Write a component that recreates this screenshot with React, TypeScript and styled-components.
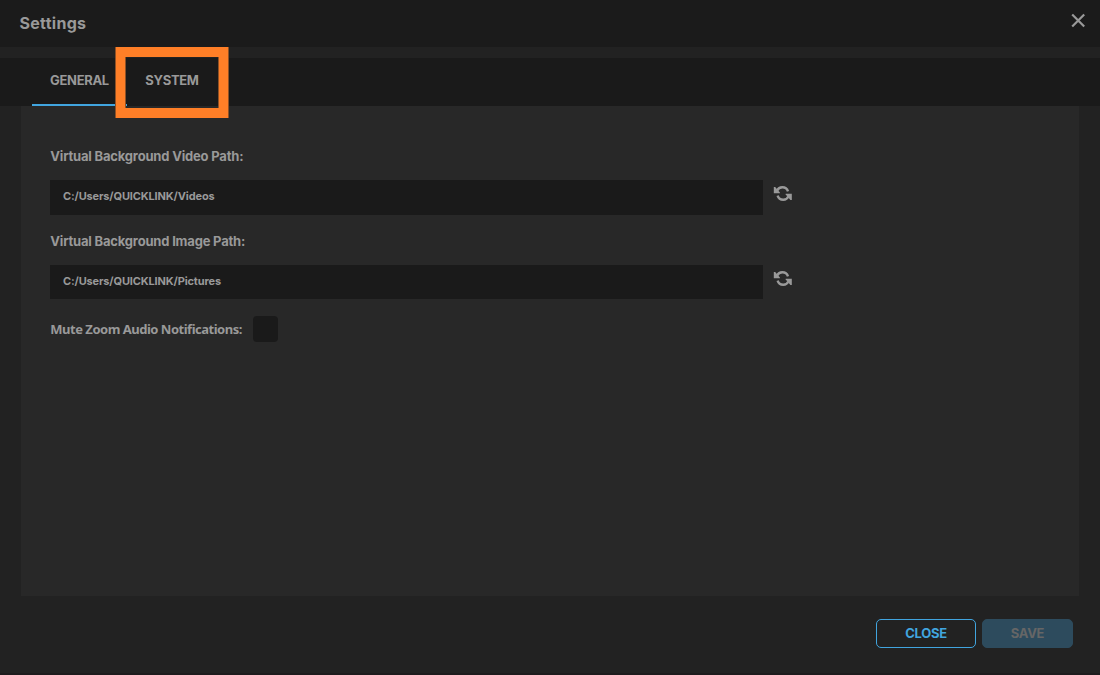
import React from "react";
import styled, { createGlobalStyle } from "styled-components";

const GlobalStyle = createGlobalStyle`
  * { box-sizing: border-box; }
  body { margin: 0; background: #222222; font-family: Inter, "Liberation Sans", sans-serif; color: #999999; }
`;

const Dialog = styled.div`
  display: flex;
  flex-direction: column;
  width: 1100px;
  height: 675px;
  overflow: hidden;
  background: #222222;
  border-bottom: 2px solid #1e1c1d;
`;

const Header = styled.header`
  display: flex;
  justify-content: space-between;
  align-items: flex-start;
  height: 47px;
  flex: none;
  padding: 13px 15px 0 19.5px;
  background: #1b1b1b;
`;

const Title = styled.h1`
  margin: 0;
  font-size: 16px;
  line-height: 20px;
  font-weight: 700;
  letter-spacing: 0.28px;
`;

const IconButton = styled.button`
  display: block;
  padding: 0;
  border: 0;
  background: none;
  color: #999999;
  line-height: 0;
`;

const Tabs = styled.nav`
  display: flex;
  flex: none;
  height: 48px;
  margin-top: 11px;
  padding-left: 32px;
  background: #1a1a1a;
`;

const Tab = styled.button<{ $active?: boolean }>`
  position: relative;
  width: ${(p) => (p.$active ? 95 : 90)}px;
  padding: 0 0 2px;
  border: 0;
  border-bottom: 2px solid ${(p) => (p.$active ? "#41a5df" : "transparent")};
  background: none;
  color: #999999;
  font: 700 13px/16px Inter, sans-serif;
  letter-spacing: -0.32px;
`;

const Highlight = styled.span`
  position: absolute;
  left: -11px;
  top: -11px;
  width: 112px;
  height: 71px;
  border: solid #ff7f27;
  border-width: 10px 9px;
  box-shadow: 1px 0 #8f5125, -1px 0 #8f5125, inset 1px 0 #8f5125, inset -1px 0 #8f5125;
`;

const Panel = styled.main`
  flex: none;
  height: 490px;
  margin: 0 21px;
  padding: 42px 29px 0;
  background: #282828;
`;

const Field = styled.div`
  height: 85px;
`;

const Label = styled.label<{ $spacing: number; $family?: string }>`
  display: block;
  padding-left: 0.3px;
  font-family: ${(p) => p.$family ?? "Inter"}, sans-serif;
  font-size: 13px;
  line-height: 17px;
  font-weight: 700;
  letter-spacing: ${(p) => p.$spacing}px;
  white-space: nowrap;
`;

const PathRow = styled.div`
  display: flex;
  align-items: flex-start;
  gap: 10px;
  margin-top: 15px;
`;

const PathInput = styled.div<{ $height: number }>`
  width: 713px;
  height: ${(p) => p.$height}px;
  padding: 9px 13px;
  background: #1a1a1a;
  font-size: 11px;
  line-height: 14px;
  font-weight: 700;
  letter-spacing: -0.14px;
`;

const ResetButton = styled(IconButton)`
  margin-top: 4px;
`;

const CheckRow = styled.div`
  display: flex;
  align-items: center;
  margin-top: -2px;
`;

const CheckLabel = styled(Label)`
  width: 203px;
`;

const Checkbox = styled.span`
  width: 25px;
  height: 26px;
  border-radius: 4px;
  background: #1a1a1a;
`;

const Footer = styled.footer`
  display: flex;
  justify-content: flex-end;
  gap: 6px;
  padding: 23px 27px 0;
`;

const Button = styled.button<{ $primary?: boolean }>`
  width: ${(p) => (p.$primary ? 91 : 100)}px;
  height: 29px;
  padding: 0 0 2px;
  border: 1px solid ${(p) => (p.$primary ? "#2d4b5d" : "#41a5df")};
  border-radius: 5px;
  background: ${(p) => (p.$primary ? "#2d4b5d" : "transparent")};
  color: ${(p) => (p.$primary ? "#666666" : "#41a5df")};
  font: 700 13px/16px Inter, sans-serif;
  letter-spacing: -0.28px;
`;

const CloseIcon = () => (
  <svg width="14" height="15" viewBox="0 0 14 15" fill="none" stroke="currentColor" strokeWidth="2.2">
    <path d="M1.2 1.5 13.2 13.5M13.2 1.5 1.2 13.5" />
  </svg>
);

const SyncIcon = () => (
  <svg width="20" height="19" viewBox="0 0 20 19">
    <g fill="none" stroke="currentColor" strokeWidth="2.4">
      <path d="M4.2 6.6C5.1 4.4 7 3.2 9.3 3.2c2.8 0 4.9 1.6 5.7 4.1" />
      <path d="M15.4 12.4c-.9 2.2-2.8 3.4-5.1 3.4-2.8 0-4.9-1.6-5.7-4.1" />
    </g>
    <g fill="currentColor">
      <path d="M.8 3.1h1.4l1.7 1.9 3 3.4v.8H.8z" />
      <path d="M18.8 15.9h-1.4l-1.7-1.9-3-3.4v-.8h6.1z" />
    </g>
  </svg>
);

interface PathFieldProps {
  label: string;
  value: string;
  height: number;
}

const PathField = ({ label, value, height }: PathFieldProps) => (
  <Field>
    <Label $spacing={-0.19}>{label}</Label>
    <PathRow>
      <PathInput $height={height}>{value}</PathInput>
      <ResetButton aria-label="Reset path">
        <SyncIcon />
      </ResetButton>
    </PathRow>
  </Field>
);

export default function App() {
  return (
    <>
      <GlobalStyle />
      <Dialog role="dialog">
        <Header>
          <Title>Settings</Title>
          <IconButton aria-label="Close settings">
            <CloseIcon />
          </IconButton>
        </Header>
        <Tabs>
          <Tab $active>GENERAL</Tab>
          <Tab>
            SYSTEM
            <Highlight />
          </Tab>
        </Tabs>
        <Panel>
          <PathField label="Virtual Background Video Path:" value="C:/Users/QUICKLINK/Videos" height={35} />
          <PathField label="Virtual Background Image Path:" value="C:/Users/QUICKLINK/Pictures" height={34} />
          <CheckRow>
            <CheckLabel $spacing={-0.49} $family='"Noto Sans"'>Mute Zoom Audio Notifications:</CheckLabel>
            <Checkbox />
          </CheckRow>
        </Panel>
        <Footer>
          <Button>CLOSE</Button>
          <Button $primary>SAVE</Button>
        </Footer>
      </Dialog>
    </>
  );
}
